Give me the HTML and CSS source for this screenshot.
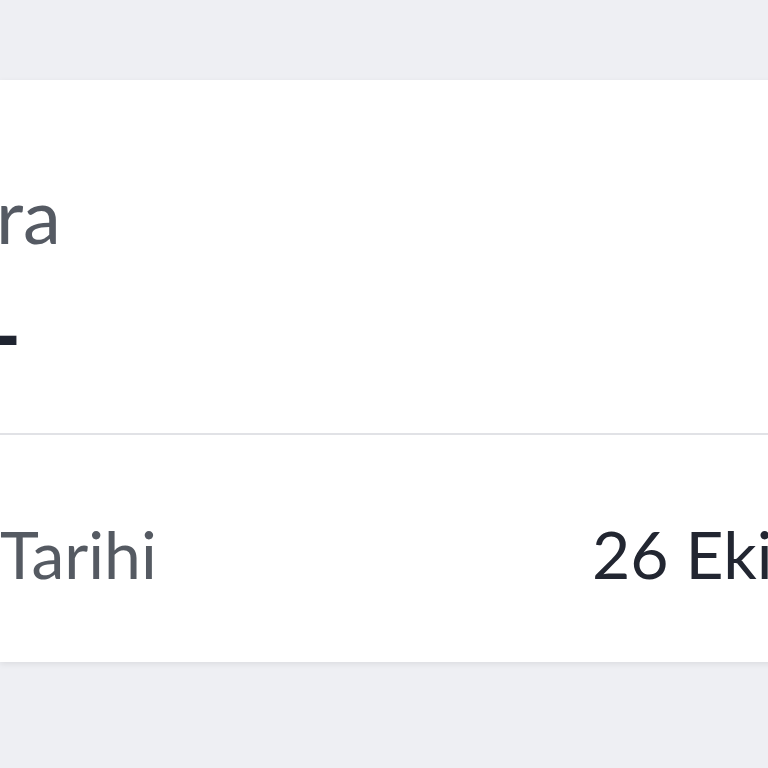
FILE: index.html
```html
<!DOCTYPE html>
<html lang="tr">
<head>
    <meta charset="UTF-8">
    <meta name="viewport" content="width=device-width, initial-scale=1.0">
    <title>Sipariş Detayı</title>
    <link rel="stylesheet" href="styles.css">
</head>
<body>

<!-- Bilgi kartı -->
<div class="info-card">
    <div class="card-top">
        <div class="card-label">ra</div>
        <div class="card-value">-</div>
    </div>
    <div class="card-row">
        <span class="row-label">Tarihi</span>
        <span class="row-value">26 Eki</span>
    </div>
</div>

</body>
</html>
```

FILE: styles.css
```css
/* Genel */
body {
    margin: 0;
    padding: 0;
    background: #eeeff3;
    font-family: 'Lato', 'Open Sans', sans-serif;
    overflow: hidden;
    height: 768px;
}

/* Kart */
.info-card {
    margin-top: 80px;
    width: 900px;
    height: 582px;
    background: #fff;
    box-shadow: 0 2px 6px rgba(0, 0, 0, 0.08);
    display: flex;
    flex-direction: column;
}

.card-top {
    height: 355px;
    box-sizing: border-box;
    padding-top: 95px;
    border-bottom: 2px solid #e1e2e6;
}

.card-label {
    font-size: 76px;
    line-height: 80px;
    color: #555a63;
    margin-left: -4px;
}

.card-value {
    font-size: 90px;
    line-height: 84px;
    font-weight: 700;
    color: #1f2430;
    margin-top: 36px;
    margin-left: -12px;
}

/* Tarih satırı */
.card-row {
    flex: 1;
    display: grid;
    grid-template-columns: 592px auto;
    align-items: center;
    padding-top: 10px;
}

.row-label {
    font-size: 66px;
    color: #555a62;
}

.row-value {
    font-size: 66px;
    color: #222631;
    white-space: nowrap;
}
```
